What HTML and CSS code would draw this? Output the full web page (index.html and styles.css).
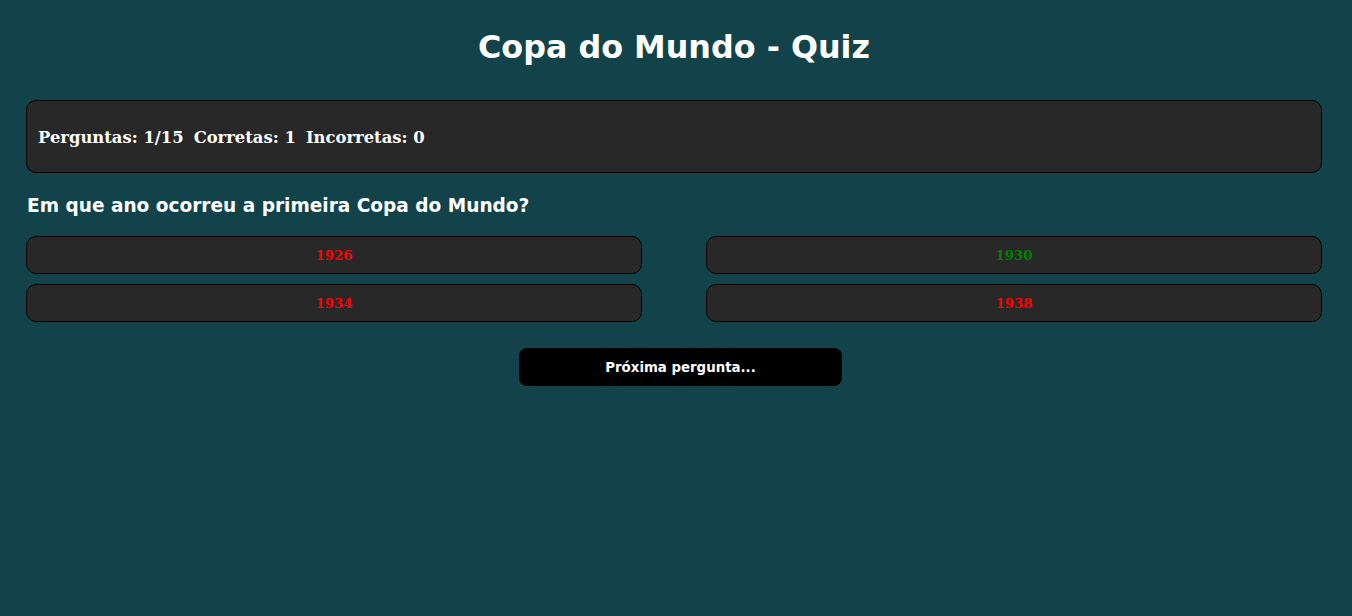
FILE: index.html
```html
<!DOCTYPE html>
<html lang="pt">
<head>
<meta charset="utf-8">
<title>Copa do Mundo - Quiz</title>
<link rel="stylesheet" href="styles.css">
</head>
<body>
<main class="quiz">
  <h1 class="title">Copa do Mundo - Quiz</h1>
  <div class="stats">
    <span>Perguntas: 1/15</span>
    <span>Corretas: 1</span>
    <span>Incorretas: 0</span>
  </div>
  <h2 class="question">Em que ano ocorreu a primeira Copa do Mundo?</h2>
  <div class="answers">
    <button class="answer wrong">1926</button>
    <button class="answer right">1930</button>
    <button class="answer wrong">1934</button>
    <button class="answer wrong">1938</button>
  </div>
  <div class="next-row">
    <button class="next">Próxima pergunta...</button>
  </div>
</main>
</body>
</html>
```

FILE: styles.css
```css
html, body {
  margin: 0;
  padding: 0;
}
body {
  background: #12434a;
  color: #ffffff;
  font-family: "DejaVu Sans", Verdana, sans-serif;
  min-height: 616px;
}
.quiz {
  padding: 28px 30px 0 26px;
}
.title {
  margin: 0;
  text-align: center;
  font-size: 31.8px;
  line-height: 37px;
  font-weight: bold;
}
.stats {
  margin-top: 35px;
  background: #282828;
  border: 1px solid #000;
  border-radius: 10px;
  padding: 27px 11px 25px;
  display: flex;
  gap: 10px;
  font-family: "DejaVu Serif", Georgia, serif;
  font-weight: bold;
  font-size: 16.4px;
  line-height: 19px;
}
.question {
  margin: 22px 0 19px 1px;
  font-size: 18.55px;
  line-height: 22px;
  font-weight: bold;
}
.answers {
  display: grid;
  grid-template-columns: 1fr 1fr;
  column-gap: 64px;
  row-gap: 10px;
}
.answer {
  height: 38px;
  background: #282828;
  border: 1px solid #000;
  border-radius: 10px;
  font-family: "DejaVu Serif", Georgia, serif;
  font-weight: bold;
  font-size: 13.333px;
  padding: 0;
  margin: 0;
}
.answer.wrong { color: #ff0000; }
.answer.right { color: #008000; }
.next-row {
  display: flex;
  justify-content: center;
  margin-top: 26px;
  padding-left: 13px;
}
.next {
  width: 323px;
  height: 38px;
  background: #000;
  color: #fff;
  border: none;
  border-radius: 8px;
  font-family: "DejaVu Sans", Verdana, sans-serif;
  font-weight: bold;
  font-size: 13.333px;
  padding: 0;
}
```
